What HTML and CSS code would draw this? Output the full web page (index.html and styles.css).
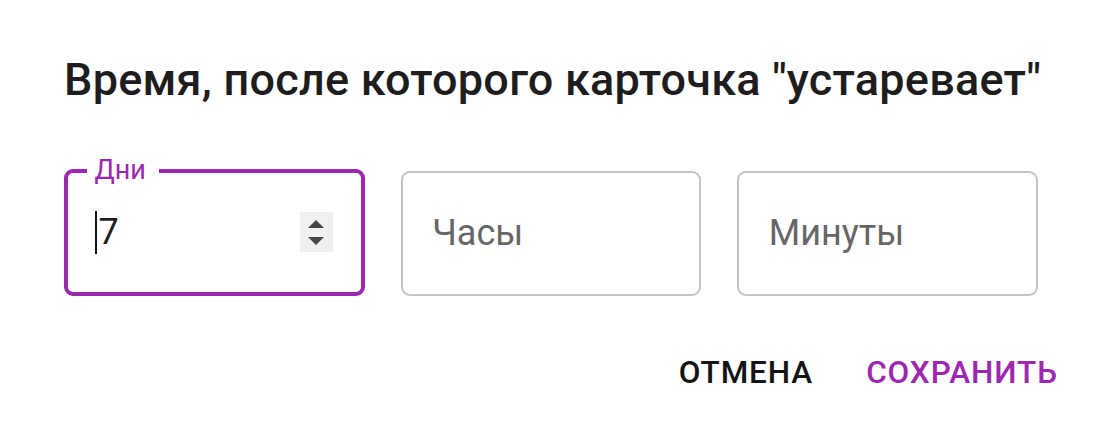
FILE: index.html
```
<!DOCTYPE html>
<html lang="ru">
<head>
    <meta charset="UTF-8">
    <meta name="viewport" content="width=device-width, initial-scale=1.0">
    <title>Время устаревания</title>
    <link rel="stylesheet" href="styles.css">
</head>
<body>
<div class="dialog">
    <h1 class="dialog-title">Время, после которого карточка "устаревает"</h1>

    <div class="fields">
        <div class="field focused">
            <span class="field-label">Дни</span>
            <div class="field-value">
                <span class="caret"></span><span>7</span>
            </div>
            <span class="spinner">
                <svg width="16" height="25" viewBox="0 0 16 25">
                    <path d="M8 0 L16 8 L0 8 Z" fill="#454545"/>
                    <path d="M0 17 L16 17 L8 25 Z" fill="#454545"/>
                </svg>
            </span>
        </div>
        <div class="field">
            <div class="field-value placeholder">Часы</div>
        </div>
        <div class="field">
            <div class="field-value placeholder">Минуты</div>
        </div>
    </div>

    <div class="actions">
        <button class="btn">Отмена</button>
        <button class="btn primary">Сохранить</button>
    </div>
</div>
</body>
</html>
```

FILE: styles.css
```
body {
    margin: 0;
    background-color: #fff;
    font-family: Roboto, "Liberation Sans", sans-serif;
    color: rgba(0, 0, 0, 0.87);
}

.dialog {
    padding: 49.5px 58px 0 64px;
}

.dialog-title {
    margin: 0;
    font-size: 45px;
    font-weight: 500;
    line-height: 60px;
    letter-spacing: 0.24px;
    white-space: nowrap;
    color: #1d1d1d;
}

.fields {
    display: grid;
    grid-template-columns: repeat(3, 1fr);
    column-gap: 36px;
    align-items: end;
    margin-top: 59.5px;
}

.field {
    position: relative;
    box-sizing: border-box;
    height: 124.5px;
    border: 2px solid #c4c4c4;
    border-radius: 9px;
    padding: 0 29.5px;
    display: flex;
    align-items: center;
}

.field.focused {
    height: 126.5px;
    border: 4.5px solid #9c27b0;
    padding: 0 27px;
}

.field-label {
    position: absolute;
    top: -16px;
    left: 18.5px;
    padding: 0 13px 0 8px;
    background-color: #fff;
    color: #9c27b0;
    font-size: 27px;
    line-height: 27px;
}

.field-value {
    flex: 1;
    display: flex;
    align-items: center;
    font-size: 36px;
    line-height: 43px;
    color: #1d1d1d;
}

.field-value.placeholder {
    color: #666;
}

.caret {
    display: inline-block;
    width: 1.5px;
    height: 43px;
    background-color: #111;
    margin-right: 2px;
}

.spinner {
    display: flex;
    align-items: center;
    justify-content: center;
    width: 33px;
    height: 40px;
    background-color: #f0f0f0;
    margin-right: 1px;
}

.spinner svg {
    display: block;
}

.actions {
    display: flex;
    justify-content: flex-end;
    gap: 17px;
    margin: 35.5px -38px 0 0;
}

.btn {
    border: none;
    background: none;
    padding: 13.5px 18px;
    font-family: Roboto, "Liberation Sans", sans-serif;
    font-size: 31.5px;
    font-weight: 500;
    line-height: 1.75;
    letter-spacing: 0.9px;
    text-transform: uppercase;
    color: #141414;
    cursor: pointer;
}

.btn.primary {
    color: #9c27b0;
}
```
